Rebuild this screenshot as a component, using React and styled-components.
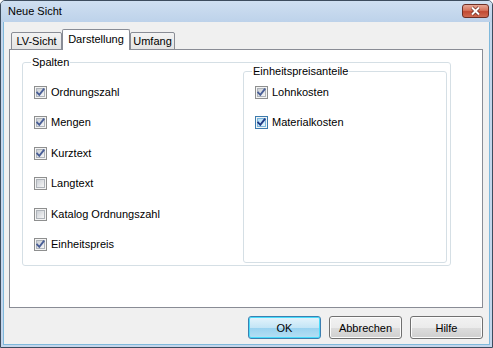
import React from "react";
import styled, { createGlobalStyle } from "styled-components";

const Global = createGlobalStyle`
  html, body { margin: 0; padding: 0; background: #fff; }
  body { font-family: "Liberation Sans", Arial, sans-serif; font-size: 11px; color: #000; }
`;

const Window = styled.div`
  width: 493px;
  height: 348px;
  box-sizing: border-box;
  display: flex;
  flex-direction: column;
  background: #c4d6ec;
  border: 1px solid #3d4c5e;
  border-radius: 5px 5px 0 0;
  overflow: hidden;
`;

const TitleBar = styled.div`
  height: 21px;
  flex: none;
  display: flex;
  align-items: center;
  justify-content: space-between;
  padding: 0 3px 0 7px;
  background: linear-gradient(#cfdff1, #bdd2ea);
`;

const Title = styled.span`
  font-size: 11px;
  line-height: 13px;
  color: #000;
`;

const CloseButton = styled.div`
  width: 25px;
  height: 12px;
  display: flex;
  align-items: center;
  justify-content: center;
  border: 1px solid #6e2f25;
  border-radius: 3px;
  background: linear-gradient(#e7a795 0%, #d6735c 45%, #c24a33 55%, #d06b52 100%);
  margin-top: -1px;
`;

const Client = styled.div`
  flex: 1;
  display: flex;
  flex-direction: column;
  margin: 0 2px 2px;
  padding: 7px 6px 0 5px;
  background: #f0f0f0;
  border: 1px solid #7fb9dc;
  border-top: none;
`;

const TabStrip = styled.div`
  display: flex;
  align-items: flex-end;
  height: 21px;
  padding-left: 2px;
  margin-bottom: -1px;
  position: relative;
  z-index: 1;
`;

const Tab = styled.div`
  box-sizing: border-box;
  display: flex;
  justify-content: center;
  width: ${(p) => p.$w}px;
  line-height: 13px;
  border: 1px solid #898c95;
  border-bottom: ${(p) => (p.$active ? "none" : "1px solid #898c95")};
  border-radius: 2px 2px 0 0;
  height: ${(p) => (p.$active ? "21px" : "18px")};
  padding-top: ${(p) => (p.$active ? "3px" : "2px")};
  margin-right: ${(p) => (p.$active ? "0" : "0")};
  background: ${(p) => (p.$active ? "#fff" : "linear-gradient(#f3f3f3, #e4e4e4)")};
  position: relative;
  z-index: ${(p) => (p.$active ? 2 : 1)};
`;

const Panel = styled.div`
  height: 259px;
  box-sizing: border-box;
  background: #fff;
  border: 1px solid #898c95;
  padding: 6px 31px 0 12px;
`;

const GroupBox = styled.fieldset`
  margin: 0;
  min-width: 0;
  border: 1px solid #d5dfe5;
  border-radius: 3px;
  padding: 0 ${(p) => p.$padRight || 11}px ${(p) => p.$padBottom || 0}px 11px;
  box-sizing: border-box;
  height: ${(p) => p.$height}px;
`;

const Legend = styled.legend`
  padding: 0 1px;
  margin-left: -3px;
  line-height: 13px;
  color: #000;
`;

const Columns = styled.div`
  display: grid;
  grid-template-columns: 209px 204px;
  margin-top: -4px;
  height: 198px;
`;

const CheckList = styled.div`
  display: flex;
  flex-direction: column;
  padding-top: ${(p) => p.$padTop}px;
`;

const CheckRow = styled.label`
  display: flex;
  align-items: center;
  gap: 4px;
  height: ${(p) => p.$h}px;
  line-height: 13px;
`;

const Box = styled.span`
  width: 13px;
  height: 13px;
  box-sizing: border-box;
  flex: none;
  position: relative;
  border: 1px solid ${(p) => (p.$hot ? "#3d7bad" : "#8e8f8f")};
  background: #f4f4f4;
`;

const BoxInner = styled.span`
  position: absolute;
  left: 1px;
  top: 1px;
  right: 1px;
  bottom: 1px;
  border: 1px solid ${(p) => (p.$hot ? "#79b5dc" : "#aeb3b9")};
  background: ${(p) =>
    p.$hot
      ? "linear-gradient(135deg, #b1dcf5, #e8f5fd)"
      : "linear-gradient(135deg, #cbcfd5, #f6f6f6)"};
`;

const Tick = styled.svg`
  position: absolute;
  left: 0;
  top: 0;
`;

const ButtonRow = styled.div`
  display: flex;
  justify-content: flex-end;
  gap: 8px;
  margin-top: 8px;
`;

const Button = styled.div`
  width: 73px;
  height: 23px;
  box-sizing: border-box;
  display: flex;
  align-items: center;
  justify-content: center;
  border-radius: 3px;
  border: 1px solid ${(p) => (p.$default ? "#3c7fb1" : "#707070")};
  box-shadow: inset 0 0 0 1px ${(p) => (p.$default ? "#48dcfb" : "#fcfcfc")};
  background: ${(p) =>
    p.$default
      ? "linear-gradient(#e5f4fc 0%, #c4e5f6 50%, #98d1ef 50%, #b6e0f4 100%)"
      : "linear-gradient(#f2f2f2 0%, #ebebeb 50%, #dddddd 50%, #cfcfcf 100%)"};
`;

function Check({ label, checked, hot, h }) {
  return (
    <CheckRow $h={h}>
      <Box $hot={hot}>
        <BoxInner $hot={hot} />
        {checked && (
          <Tick width="11" height="11" viewBox="0 0 11 11">
            <path
              d="M2.2 5.6 L4.3 7.8 L8.6 2.4"
              fill="none"
              stroke={hot ? "#1f3a86" : "#4a5f97"}
              strokeWidth="1.9"
              strokeLinecap="square"
            />
          </Tick>
        )}
      </Box>
      <span>{label}</span>
    </CheckRow>
  );
}

const spalten = [
  ["Ordnungszahl", true],
  ["Mengen", true],
  ["Kurztext", true],
  ["Langtext", false],
  ["Katalog Ordnungszahl", false],
  ["Einheitspreis", true],
];

export default function App() {
  return (
    <>
      <Global />
      <Window>
        <TitleBar>
          <Title>Neue Sicht</Title>
          <CloseButton>
            <svg width="13" height="10" viewBox="0 0 13 10">
              <path d="M3 1.5 L10 8.5 M10 1.5 L3 8.5" stroke="#6b2a20" strokeWidth="3.4" />
              <path d="M3 1.5 L10 8.5 M10 1.5 L3 8.5" stroke="#fff" strokeWidth="2" />
            </svg>
          </CloseButton>
        </TitleBar>
        <Client>
          <TabStrip>
            <Tab $w={51}>LV-Sicht</Tab>
            <Tab $w={68} $active>Darstellung</Tab>
            <Tab $w={45}>Umfang</Tab>
          </TabStrip>
          <Panel>
            <GroupBox $height={210} $padRight={3} $padBottom={2}>
              <Legend>Spalten</Legend>
              <Columns>
                <CheckList $padTop={12}>
                  {spalten.map(([l, c]) => (
                    <Check key={l} label={l} checked={c} h={30.5} />
                  ))}
                </CheckList>
                <GroupBox $height={198}>
                  <Legend>Einheitspreisanteile</Legend>
                  <CheckList $padTop={0}>
                    <Check label="Lohnkosten" checked h={29.5} />
                    <Check label="Materialkosten" checked hot h={29.5} />
                  </CheckList>
                </GroupBox>
              </Columns>
            </GroupBox>
          </Panel>
          <ButtonRow>
            <Button $default>OK</Button>
            <Button>Abbrechen</Button>
            <Button>Hilfe</Button>
          </ButtonRow>
        </Client>
      </Window>
    </>
  );
}
